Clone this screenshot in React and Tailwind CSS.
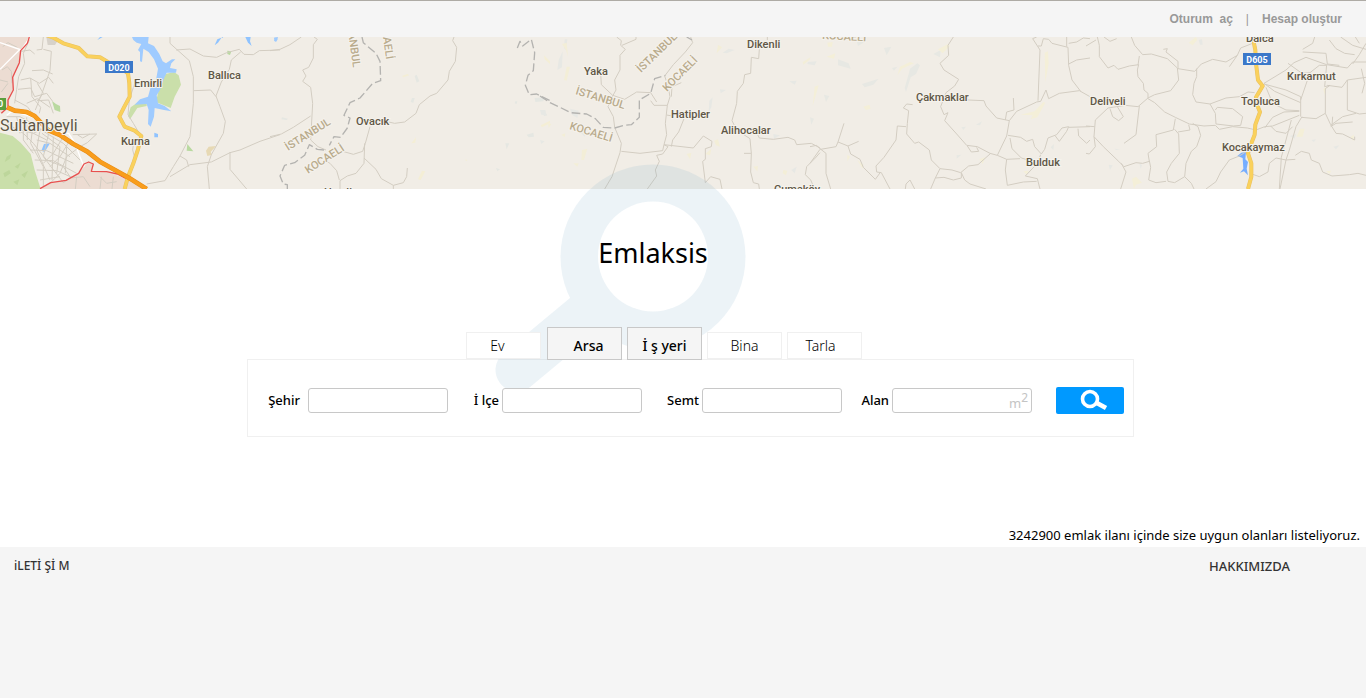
import React from "react";

/* Each tile is drawn on a grid three times finer than the map itself. */
const tiles = [
  {
    x: 0,
    areas: [
      ["#ecdcd2", "M0 111H88L62 152L56 190L38 238L40 270L20 322L0 340Z"],
      ["#ecdcd2", "M120 567L152 548L196 541L235 520L266 486L279 492L274 513L320 515L372 535L440 567Z"],
      ["#cadfaa", "M0 398L38 408L62 428L92 462L104 510L122 567H0Z"],
      ["#cadfaa", "M497 222L522 216L536 226L543 254L524 290L512 324L468 306L478 262ZM384 348L392 322L412 308L440 308L440 318L412 324L398 346L390 358Z"],
      ["#b9d9a0", "M156 303L168 312L180 318L181 336L164 330ZM562 432L580 454L560 452ZM682 152L694 154L690 165L682 162Z"],
      ["#bdd69b", "M20 470L34 462L30 476L14 486ZM44 500L62 488L54 506ZM10 520L28 510L32 520L14 532ZM64 524L84 512L74 534ZM40 545L58 538L52 556Z"],
      ["#d7d2ca", "M139 111H165L172 124L165 135H143Z"],
      ["#e7d9b4", "M618 452L626 440L648 438L640 447L632 456L636 464L622 468Z"],
      ["#9fcbff", "M396 111H446L444 130L462 138L478 162L488 184L498 190L516 178L526 178L514 190L510 204L530 208L528 218L500 218L490 240L480 270L470 286L474 310L494 318L514 334L492 330L464 324L462 350L452 380L444 372L446 330L440 312L404 314L420 298L444 290L452 262L468 240L474 206L462 178L446 156L430 146L426 186L420 184L420 156L414 150L424 132L410 128L400 120Z"],
      ["#8fc3ff", "M644 136L652 118L670 111H666L654 128ZM736 111H752L750 124L755 138L744 128ZM822 114L834 111L828 124ZM292 120L300 111H308ZM463 398L474 402V412L463 412ZM124 452L132 432L150 430L140 446L134 456Z"],
    ],
    roads: [
      "M510 111L510 130L530 148L568 182L580 230L580 310L570 410L540 468L520 500L495 542L440 552",
      "M528 150L570 147L610 168L650 172L680 158L718 148L732 163L760 164L778 152L840 150",
      "M722 156L694 180L688 208L664 246L648 288L660 320L676 364L670 400L634 464L622 500L628 567",
      "M582 272L632 270L648 290M840 404L780 424L720 450L690 458L634 486L570 494L510 530",
      "M690 456V508L740 567M540 468L560 480L566 500M384 344L400 370L418 400M384 344L388 300L404 250M402 420L398 450L406 480",
      "M130 148L154 154L150 212L126 280L106 330M88 120L70 160L74 190L56 230L50 268L44 310M130 111L126 148L110 150M64 154L90 150L104 162M96 212L130 210L158 222M62 240L90 234L118 250L146 232L160 250M54 268L92 264L104 290L140 280L158 304M92 234L96 290L122 322L118 340",
      "M112 250L130 280L112 302L146 300L160 340M80 310L112 296L150 322M44 300L82 320L100 344",
      "M20 350L60 350L100 372L140 400L190 430L240 480M20 370L70 400L100 430L140 480L190 500L210 530M70 360L70 420L100 460M100 370L92 430L130 500L130 560M120 390L110 450L150 540M146 400L130 470L190 548M190 410L160 460L130 490M210 420L180 470L150 500M240 440L200 470L180 520L150 550M110 420L150 430L210 470M90 450L140 452L220 490M104 480L160 482L230 520M110 510L170 512L220 534M120 540L180 530M218 404L290 402L262 428L240 440M232 404L248 414L270 402",
      "M50 350L60 400M80 352L82 420M60 390L100 400L140 420M100 400L140 380M126 400L180 440L170 520M160 410L156 540M200 440L196 520",
      "M8 140L24 128L52 142M6 210L22 200L34 214L36 250M0 240L24 246M4 276L24 250",
      "M190 548L210 534L250 530L270 560M230 530L226 567M300 530L320 550L350 545M304 530L300 567M340 530L336 567",
    ],
    white: ["M0 128L64 150M0 208L58 150M20 346L36 334L82 346L120 360M64 150L90 111M160 396L206 400L226 432L240 470L252 500M206 400L232 440"],
    red: ["M88 111L82 130L62 152L58 188L38 232L40 270L24 300L24 322L4 340M120 566L152 548L198 541L236 520L252 492L266 486L280 492L274 514L320 515L352 522L386 540"],
    yellow: ["M136 104L162 114L190 130L236 144L262 169L300 172L330 190L362 204L384 220L388 250L389 290L372 322L358 350L374 380L404 392L424 408L414 448L400 490L384 530L374 567"],
    orange: ["M22 322L44 332L80 336L104 348L144 390L180 405L220 432L262 455L300 485L384 532L440 567"],
  },
  {
    x: 270,
    areas: [
      ["#9fcbff", "M14 112L24 116L18 126L12 122Z"],
      ["#e5e7e2", "M434 228L440 224L448 244L440 248ZM426 294L434 294L430 308L422 306ZM36 352L54 356L50 360L34 358ZM770 404L790 398L792 410L776 412ZM794 294L824 292L820 304L796 306ZM816 330L832 346L822 348ZM706 430L718 430L710 448ZM678 504L690 508L682 514ZM736 304L742 304L740 312L734 310Z"],
      ["#f4eed5", "M444 538L456 512L466 514L452 540ZM396 228L412 222L418 226L400 232ZM424 430L438 412L436 428ZM822 166L840 184V192L824 178ZM812 376L840 362V370L816 382ZM586 478L592 480L588 484Z"],
    ],
    roads: [
      "M0 152L30 148L60 134L94 111M132 111L142 118L130 134V174L116 202L98 210L108 228L98 244L122 262L128 310L122 420L144 440L168 450",
      "M0 410L34 402L70 382L122 348M218 454L250 463L278 454L286 430L300 380M284 430L282 490L258 520L232 528L210 542V567M282 474L318 508L334 536L370 556L400 548L410 530L412 504M370 556V567M162 480L180 490L200 512L208 540",
      "M552 111L548 122L560 142L556 184L538 214L534 240L500 280L480 288L448 314L438 340L404 366L374 370L356 366",
    ],
    dashed: [
      "M276 111L280 128L318 160L330 184L332 242L308 250L270 294L240 308L222 346L240 354L232 384L212 412L192 410L178 436",
      "M162 450L142 448L118 434L104 466L74 488L44 496L30 528L40 552L52 554V567",
      "M742 144L750 124L758 138L784 118L794 158L790 212L774 226L766 256L778 284L800 282L840 302",
    ],
  },
  {
    x: 540,
    areas: [
      ["#e7e8e4", "M56 180L68 154L66 202L52 210ZM74 118H82L78 150L72 144ZM508 302L518 292L514 322L506 336ZM540 268L558 270L542 280ZM548 158L566 146L584 150L560 160ZM90 326L116 332L112 354L96 344ZM0 330H16L20 346L4 344ZM120 396L140 398L134 410ZM804 186L830 184L824 196L802 192ZM748 244L770 242L764 254ZM700 402L720 406L702 416ZM0 420L14 424L4 432ZM754 510L770 500L764 520Z"],
      ["#f3eed7", "M66 132L80 128L84 170L78 150ZM80 200H90L80 242L72 240ZM126 450L142 446L132 480H124ZM440 462L454 458L450 478ZM496 462L514 446L510 466ZM522 422L534 418L540 440L528 436ZM534 134L546 142L530 160ZM788 186L812 172L808 180L790 194ZM640 500L654 498L652 514ZM730 510L742 512L738 526L728 520ZM24 370L34 372L26 384ZM100 490H116L112 500ZM64 404L76 400L74 412Z"],
    ],
    roads: [
      "M230 111L244 122L242 136L256 148L240 166V210L224 240L228 270L218 288L204 320L220 350L224 382L244 430L240 458L216 530L194 567",
      "M246 136L288 118V111M182 220L184 254L218 286L254 298L290 276L332 278L350 306M452 111L458 128L436 156L400 194L374 228L384 258L390 290L382 316L342 316L332 302",
      "M382 316L376 370L380 404L372 434L384 440L368 462L350 466L358 484L346 510L350 528L322 567M244 454L300 460L368 452L372 434L460 444L490 408L516 424L514 440L496 446V478L488 484L496 548L512 530L540 538L546 567",
      "M394 440L398 420L416 396L436 346M394 290L396 260L424 248M380 345L396 348",
      "M682 120V111M658 148L656 176L634 172L632 220L614 224L610 250L592 274L590 310L576 362L590 390L630 416L634 460L632 516L640 548L656 552L658 567M612 460H634M650 398L658 414L700 418L744 412L764 420L770 434L814 430L840 444M840 458L826 474L800 500L796 524L812 540L824 567",
    ],
    dashed: [
      "M0 288L30 308L56 320L92 338L140 342L166 356L190 382L224 384L252 376L274 374L298 352V300L332 280L344 236L376 226",
      "M440 111L456 120",
    ],
  },
  {
    x: 810,
    areas: [
      ["#e7e8e3", "M222 144L244 140L230 166ZM246 204L262 200L252 212ZM300 206L322 190L330 196L318 222L302 232L288 276L284 264L296 222ZM156 252L206 236L190 254L164 262ZM84 178L116 190L122 206L84 196ZM140 122L164 126L144 138ZM42 284L58 288L48 306ZM0 352L12 356L4 374ZM454 382L468 380L460 390ZM498 374L516 364L510 376ZM440 466L454 464L440 476ZM722 442L732 432L730 450ZM370 162L392 150L390 172Z"],
      ["#f4efd8", "M270 200L300 186L312 190L276 206L262 226ZM384 148L414 132L420 138L398 160ZM704 158L714 154L716 190L706 246ZM632 344L674 334L700 306L706 308L682 352L662 358L668 346ZM52 128L68 126L66 140H54ZM160 320L178 314L182 326L168 330ZM112 464L120 470L112 484ZM142 480L160 494L158 506ZM14 260L26 256L8 318ZM50 170L76 160L72 176ZM508 478L526 472L518 492ZM640 514L656 512L650 524Z"],
    ],
    roads: [
      "M430 111L414 136L416 166L390 190L402 210L446 238L434 258L408 278L392 320L402 344L414 338L404 362L440 402L470 436L502 440L540 460L562 466L590 408L598 362L620 334L680 306L692 304L708 270L716 296L748 280L808 272L840 290",
      "M472 438L484 456L506 454L500 442M474 300L522 302L528 318L560 354L598 362M586 360L590 336L612 330L610 294M684 302L690 150L668 116L680 111M684 138L694 138L700 116L716 118L726 130L774 142L776 196L786 240L812 274M770 111V140M776 130L800 126L820 114L840 116M776 192L800 180L840 174",
      "M308 314L290 312L280 324L296 332L292 370L290 402L314 430L326 426L358 450L364 480L390 506L426 510L452 518L476 498L504 494L540 462M390 506L376 534L362 567M376 534L402 532L430 540L454 534V518L464 540L480 552L528 567",
      "M288 380L262 378L258 420L222 472L198 498L200 516L214 518L240 567M0 440L20 436L32 448L78 440L84 426L102 370M84 426L114 438L146 424M114 438L122 462L150 478L160 502L196 538L212 516M30 446L48 460V520L62 567M30 448L0 490M286 567L288 552L300 540L314 567",
      "M594 406L632 412L650 424L668 418L674 440L694 462L704 448L714 414L740 404L756 384L776 380L770 394L748 424L736 408M776 382L840 380M804 386L806 408L830 430L840 420M600 414L606 446L634 474L682 488L692 464M562 466L590 478L586 510L592 556L640 546L680 544M590 478L630 476M682 490L646 528L682 536L690 567",
    ],
  },
  {
    x: 1086,
    areas: [
      ["#e7e8e4", "M338 120L348 118L350 134H342ZM86 446L102 448L90 450ZM68 494L80 496L72 510ZM612 408L630 402L626 416ZM676 420L690 418L684 426ZM742 440L760 436L750 448ZM160 490L168 496L164 506Z"],
      ["#f4efd8", "M308 128L330 111L334 120L320 136ZM138 536L150 530L168 548L150 554L144 567ZM642 386H656L650 410H632ZM794 410L804 404L802 424ZM712 268L720 260L716 284ZM720 514L736 512L730 522Z"],
      ["#76adff", "M454 468L466 458L480 456L478 478L486 486L482 506L486 526L474 514L462 518L472 506L470 474Z"],
    ],
    roads: [
      "M34 111L40 136L40 170L66 204L84 196L96 208L130 198L158 194L154 210L156 230L172 250L174 270L186 280V294L156 320L118 316L66 324M136 111L146 136L170 164L196 162L244 176L274 204L278 240L254 272L206 284L186 294M232 148L244 146L240 156L276 184V206L326 214M160 168L156 196M326 214L346 192L380 178L420 186L454 166M320 284L324 250L332 230V206M320 284L330 306L372 312L420 294L460 290L486 276L506 278M388 330L394 322L440 326L470 350L464 376L442 378L390 372L388 340L372 312",
      "M186 296L206 308L236 336L268 352L310 372L354 378L388 376L400 388L440 380L484 384L510 390L536 380L560 378L640 346M66 324L28 360L24 410L52 440L98 484L114 500L150 488L170 490L190 484L186 460L212 440L210 404L262 390L268 356M266 388L278 402L280 460L256 490L242 516L246 544L266 548L296 530L316 550L324 567M308 374L312 390L276 396M320 370L336 380L344 406L332 440L316 454L300 490L296 530M54 111L72 124L92 116M0 138L30 120M0 378L26 380M0 460L10 462L28 440L24 410M94 320L112 350L98 362L80 350L72 326M114 430L150 404L160 318M106 490L120 516L104 567M190 482L194 502L188 540L210 548L240 544",
      "M534 250L600 210L624 188L660 172L722 194L784 204L800 186L840 186M534 250L566 274L644 308M534 252L600 270L644 290V350M540 262L560 310L600 330L640 332M536 384L560 352L594 336L640 334M650 156L720 160L724 192L760 196M686 111L680 130L650 148M730 120L750 146L776 160L806 164M840 130L820 164L800 192M606 190L648 220L672 218L644 300M672 218L700 196L720 196M722 194L716 260L732 256L718 266V340L734 374L750 400L770 402L806 420L806 410M724 256L768 262L784 240L840 232M784 240V330L820 342L840 340M646 352L690 356L718 340M734 376L770 350L810 340M648 350L630 380L610 450L600 480L582 567M616 360L586 472L580 567M734 380L750 370L800 366M628 466L646 454L670 460L676 480L700 490L710 516L738 528L790 524L816 520L840 526M492 520L520 530L546 516L550 490L570 474L600 480L628 478M430 480L460 468L482 454M430 480L404 516L390 545L360 567M764 111L800 136L840 148M808 111L820 130M430 200L454 166L464 144L500 130M554 378L570 394L600 400L620 380M826 206L836 250L828 280M740 350L738 378",
    ],
    yellow: ["M504 104V130L508 150L510 190L516 240L530 258L510 292L512 312L522 336L508 374L506 404L492 440L486 460L496 490V530L486 567"],
  },
];

const places = [
  ["Emirli", 134, 87],
  ["Ballıca", 208, 79],
  ["Kurna", 121, 145],
  ["Ovacık", 356, 125],
  ["Yaka", 584, 75],
  ["Dikenli", 747, 48],
  ["Hatipler", 671, 118],
  ["Alihocalar", 721, 134],
  ["Cumaköy", 774, 193],
  ["Çakmaklar", 916, 101],
  ["Bulduk", 1026, 166],
  ["Deliveli", 1090, 105],
  ["Dalca", 1246, 42],
  ["Kırkarmut", 1287, 80],
  ["Topluca", 1241, 105],
  ["Kocakaymaz", 1222, 151],
  ["Hacıllı", 324, 196],
];

const provinces = [
  ["İSTANBUL", "translate(288 151) rotate(-32)"],
  ["KOCAELİ", "translate(308 174) rotate(-33)"],
  ["İSTANBUL", "translate(346 17) rotate(82)"],
  ["KOCAELİ", "translate(380 16) rotate(82)"],
  ["İSTANBUL", "translate(575 94) rotate(17)"],
  ["KOCAELİ", "translate(569 129) rotate(17)"],
  ["İSTANBUL", "translate(641 73) rotate(-44)"],
  ["KOCAELİ", "translate(667 92) rotate(-45)"],
  ["KOCAELİ", "translate(822 39) rotate(3)"],
];

function Shield({ x, y, children }) {
  return (
    <g>
      <rect x={x} y={y} width="28" height="12" fill="#3b78c9" />
      <text x={x + 14} y={y + 10} textAnchor="middle" className="fill-white text-[9px] font-bold">
        {children}
      </text>
    </g>
  );
}

function MapBanner() {
  return (
    <svg
      viewBox="0 37 1366 152"
      preserveAspectRatio="xMidYMid slice"
      className="block h-[152px] w-full bg-[#f1ede6] font-['Roboto',sans-serif]"
      role="img"
      aria-label="Harita"
    >
      {tiles.map((t) => (
        <g key={t.x} transform={`translate(${t.x} 0) scale(0.33333)`} fill="none" strokeLinejoin="round">
          {t.areas.map(([color, d]) => (
            <path key={d} d={d} fill={color} />
          ))}
          {t.roads.map((d) => (
            <path key={d} d={d} stroke="#d3cdc2" strokeWidth="3" />
          ))}
          {(t.white || []).map((d) => (
            <path key={d} d={d} stroke="#ffffff" strokeWidth="4" />
          ))}
          {(t.dashed || []).map((d) => (
            <path key={d} d={d} stroke="#b4b3b0" strokeWidth="4" strokeDasharray="26 10" />
          ))}
          {(t.red || []).map((d) => (
            <path key={d} d={d} stroke="#e8504f" strokeWidth="4" />
          ))}
          {(t.yellow || []).map((d) => (
            <g key={d}>
              <path d={d} stroke="#e8c062" strokeWidth="12" />
              <path d={d} stroke="#fad15c" strokeWidth="9" />
            </g>
          ))}
          {(t.orange || []).map((d) => (
            <g key={d}>
              <path d={d} stroke="#e58a14" strokeWidth="14" />
              <path d={d} stroke="#f99d1c" strokeWidth="11" />
            </g>
          ))}
        </g>
      ))}
      <g fill="#b9ab8c" stroke="#f5f2ec" strokeWidth="2" paintOrder="stroke" className="text-[11px] font-medium">
        {provinces.map(([name, transform]) => (
          <text key={transform} transform={transform}>
            {name}
          </text>
        ))}
      </g>
      <g fill="#5f5746" stroke="#f5f2ec" strokeWidth="2" paintOrder="stroke" className="text-[11px] font-medium">
        {places.map(([name, x, y]) => (
          <text key={name} x={x} y={y}>
            {name}
          </text>
        ))}
        <text x="0" y="131" className="text-[16px] font-normal">
          Sultanbeyli
        </text>
      </g>
      <Shield x={105} y={61}>D020</Shield>
      <Shield x={1243} y={53}>D605</Shield>
      <rect x="-6" y="98" width="12" height="12" fill="#5b9f3d" />
      <text x="-2" y="107" className="fill-white text-[9px] font-bold">0</text>
    </svg>
  );
}

function Watermark() {
  return (
    <svg
      aria-hidden="true"
      viewBox="495 164 252 224"
      className="pointer-events-none absolute -top-[25px] left-[248px] h-[224px] w-[252px]"
    >
      <defs>
        <mask id="lens" maskUnits="userSpaceOnUse" x="495" y="164" width="252" height="224">
          <path d="M653 257L517 370" stroke="#fff" strokeWidth="43" strokeLinecap="round" />
          <circle cx="653" cy="257" r="92.5" fill="#fff" />
          <circle cx="653" cy="256.5" r="55" fill="#000" />
        </mask>
      </defs>
      <rect x="495" y="164" width="252" height="224" fill="rgb(109 159 190 / 0.13)" mask="url(#lens)" />
    </svg>
  );
}

const tabBase = "w-[75px] border text-[14px] leading-5 text-black";
const tabPlain = `${tabBase} h-[27px] border-[#f0f0f0] bg-white font-light`;
const tabActive = `${tabBase} relative z-10 h-[33px] border-[#c8c8c8] bg-[#f5f5f5] pt-1 font-medium`;

const inputStyle =
  "h-[25px] w-[140px] rounded-[3px] border border-[#c8c8c8] bg-white px-2 text-[13px] outline-none focus:border-[#0099ff]";
const labelStyle = "whitespace-pre text-[13px] leading-5 font-medium text-black";

function Field({ id, label, first }) {
  return (
    <div className={first ? "flex items-center justify-end gap-2" : "flex items-center justify-end gap-[3px]"}>
      <label htmlFor={id} className={labelStyle}>
        {label}
      </label>
      <input id={id} type="text" className={inputStyle} />
    </div>
  );
}

export default function App() {
  return (
    <div className="bg-white font-['Noto_Sans',sans-serif] text-black">
      <header className="flex h-[37px] items-center justify-end border-t border-[#aeaba5] bg-[#f5f5f5] pr-6 font-['Liberation_Sans',sans-serif] text-[12px] font-bold text-[#999]">
        <nav className="flex items-center">
          <a href="#oturum" className="whitespace-pre">Oturum  aç</a>
          <span className="px-[13px] font-normal">|</span>
          <a href="#hesap">Hesap oluştur</a>
        </nav>
      </header>
      <MapBanner />

      <main className="flex flex-col pl-[15px]">
        <div className="relative mx-auto w-[887px]">
          <Watermark />
          <h1 className="relative pt-[44px] pr-[75px] text-center text-[27px] leading-10">Emlaksis</h1>
          <div className="relative mt-[53px] flex h-[34px] items-end gap-[5px] pl-[219px]">
            <button type="button" className={tabPlain + " mr-px mb-px pr-3"}>Ev</button>
            <button type="button" aria-pressed="true" className={tabActive + " pl-2"}>Arsa</button>
            <button type="button" aria-pressed="true" className={tabActive}>İ ş yeri</button>
            <button type="button" className={tabPlain + " mb-px"}>Bina</button>
            <button type="button" className={tabPlain + " mb-px pr-2"}>Tarla</button>
          </div>
          <form
            className="-mt-px grid h-[78px] grid-cols-[200px_194px_200px_190px_1fr] items-center border border-[#f0f0f0] pt-1 pr-[9px]"
            onSubmit={(e) => e.preventDefault()}
          >
            <Field id="sehir" label="Şehir" first />
            <Field id="ilce" label="İ lçe" />
            <Field id="semt" label="Semt" />
            <div className="relative">
              <Field id="alan" label="Alan" />
              <span className="pointer-events-none absolute right-1 bottom-0 text-[13px] leading-5 text-[#c4c4c4]">
                m<sup className="text-[12px]">2</sup>
              </span>
            </div>
            <button
              type="submit"
              aria-label="Ara"
              className="flex h-[27px] w-[68px] items-center justify-center justify-self-end rounded-[2px] bg-[#0099ff] pl-2"
            >
              <svg viewBox="0 0 28 22" className="h-[22px] w-7" fill="none" stroke="#fff">
                <circle cx="10" cy="10" r="7.5" strokeWidth="3.6" />
                <path d="M16 13.5L26 19" strokeWidth="4.6" />
              </svg>
            </button>
          </form>
        </div>
        <p className="mt-[88px] pr-1.5 pb-[2px] text-right text-[13px] leading-5">
          3242900 emlak ilanı içinde size uygun olanları listeliyoruz.
        </p>
      </main>

      <footer className="flex h-[151px] items-start justify-between bg-[#f5f5f5] pt-[9px] pr-[76px] pl-[14px] leading-5 font-medium text-[#333]">
        <a href="#iletisim" className="text-[12px] leading-5">iLETİ Şİ M</a>
        <a href="#hakkimizda" className="text-[13px] leading-5">HAKKIMIZDA</a>
      </footer>
    </div>
  );
}
